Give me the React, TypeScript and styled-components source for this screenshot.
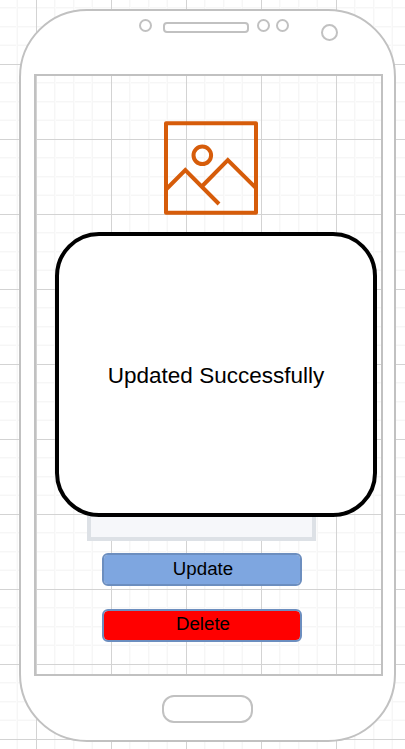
import React from 'react';
import styled, { createGlobalStyle, css } from 'styled-components';

const LINE = '#c1c1c1';

const GlobalStyle = createGlobalStyle`
  *, *::before, *::after { box-sizing: border-box; }
  body {
    margin: 0;
    overflow: hidden;
    font-family: "Liberation Sans", Arial, sans-serif;
    color: #000;
  }
`;

const minorStops = `transparent 18px, #f6f6f6 18px, #f6f6f6 19px, #fbfbfb 19px, #fbfbfb 20px, transparent 20px,
  transparent 37px, #f6f6f6 37px, #f6f6f6 38px, #fbfbfb 38px, #fbfbfb 39px, transparent 39px,
  transparent 55px, #fbfbfb 55px, #fbfbfb 56px, #f6f6f6 56px, #f6f6f6 57px, transparent 57px`;

const grid = css<{ $x: number; $y: number }>`
  background-color: #fff;
  background-image:
    linear-gradient(90deg, #d3d3d3 1px, transparent 1px),
    linear-gradient(180deg, #d3d3d3 1px, transparent 1px),
    linear-gradient(90deg, ${minorStops}),
    linear-gradient(180deg, ${minorStops});
  background-size: 75px 75px;
  background-position: ${p => p.$x}px ${p => p.$y}px;
`;

const Canvas = styled.main<{ $x: number; $y: number }>`
  ${grid}
  width: 405px;
  height: 749px;
  padding: 9px 0 0 19px;
  overflow: hidden;
`;

const Phone = styled.section`
  position: relative;
  display: flex;
  flex-direction: column;
  width: 377px;
  height: 733px;
  border: 2px solid ${LINE};
  border-radius: 68px;
  background: #fff;
`;

const SensorBar = styled.header`
  flex: 0 0 63px;
  display: flex;
  align-items: flex-start;
  padding: 7px 0 0 118px;
`;

const Sensor = styled.span<{ $size: number; $left?: number; $top?: number }>`
  width: ${p => p.$size}px;
  height: ${p => p.$size}px;
  margin-left: ${p => p.$left ?? 0}px;
  margin-top: ${p => p.$top ?? 0}px;
  border: 2px solid ${LINE};
  border-radius: 50%;
`;

const Speaker = styled.span`
  width: 86px;
  height: 11px;
  margin: 4px 0 0 11px;
  border: 2px solid ${LINE};
  border-radius: 4px;
`;

const Screen = styled.div<{ $x: number; $y: number }>`
  ${grid}
  display: flex;
  flex-direction: column;
  width: 349px;
  height: 602px;
  margin-left: 13px;
  padding: 45px 0 0 51px;
  border: 2px solid ${LINE};
`;

const Picture = styled.svg`
  display: block;
  width: 94px;
  height: 94px;
  margin-left: 77px;
`;

const Field = styled.div`
  width: 229px;
  height: 60px;
  margin-top: 266px;
  border: 4px solid #dde1e6;
  background: #f6f7fa;
`;

const Actions = styled.div`
  display: flex;
  flex-direction: column;
  gap: 23px;
  margin: 12px 0 0 15px;
`;

const Button = styled.button<{ $fill: string; $lift: number }>`
  width: 200px;
  height: 33px;
  padding: 0 0 ${p => p.$lift}px 2px;
  border: 2px solid #6c8ebf;
  border-radius: 6px;
  background: ${p => p.$fill};
  background-clip: padding-box;
  color: #000;
  font: 18.7px/22px "Liberation Sans", Arial, sans-serif;
`;

const ChinBar = styled.footer`
  display: flex;
  padding: 19px 0 0 141px;
`;

const HomeButton = styled.span`
  width: 91px;
  height: 28px;
  border: 2px solid ${LINE};
  border-radius: 12px;
`;

const Dialog = styled.div`
  position: absolute;
  top: 221px;
  left: 34px;
  display: flex;
  align-items: center;
  justify-content: center;
  width: 322px;
  height: 285px;
  padding-top: 2px;
  border: 4px solid #000;
  border-radius: 44px;
  background: #fff;
`;

const Message = styled.p`
  margin: 0;
  font-size: 22.5px;
  line-height: 27px;
  white-space: nowrap;
`;

export default function App() {
  return (
    <>
      <GlobalStyle />
      <Canvas $x={36} $y={64}>
        <Phone>
          <SensorBar>
            <Sensor $size={13} $top={1} />
            <Speaker />
            <Sensor $size={13} $left={8} $top={1} />
            <Sensor $size={13} $left={6} $top={1} />
            <Sensor $size={17} $left={32} $top={6} />
          </SensorBar>
          <Screen $x={0} $y={63}>
            <Picture viewBox="0 0 94 94" fill="none" stroke="#d65c0a" strokeWidth="4">
              <rect x="2" y="2.3" width="90" height="89.5" strokeLinejoin="round" />
              <circle cx="38.3" cy="34.3" r="8.8" />
              <path d="M2 68.5 21.3 49.2 55 83M37.8 65.5 63.8 39 92 67" />
            </Picture>
            <Field />
            <Actions>
              <Button $fill="#7ea6e0" $lift={2}>Update</Button>
              <Button $fill="#ff0000" $lift={4}>Delete</Button>
            </Actions>
          </Screen>
          <ChinBar>
            <HomeButton />
          </ChinBar>
          <Dialog role="dialog">
            <Message>Updated Successfully</Message>
          </Dialog>
        </Phone>
      </Canvas>
    </>
  );
}
